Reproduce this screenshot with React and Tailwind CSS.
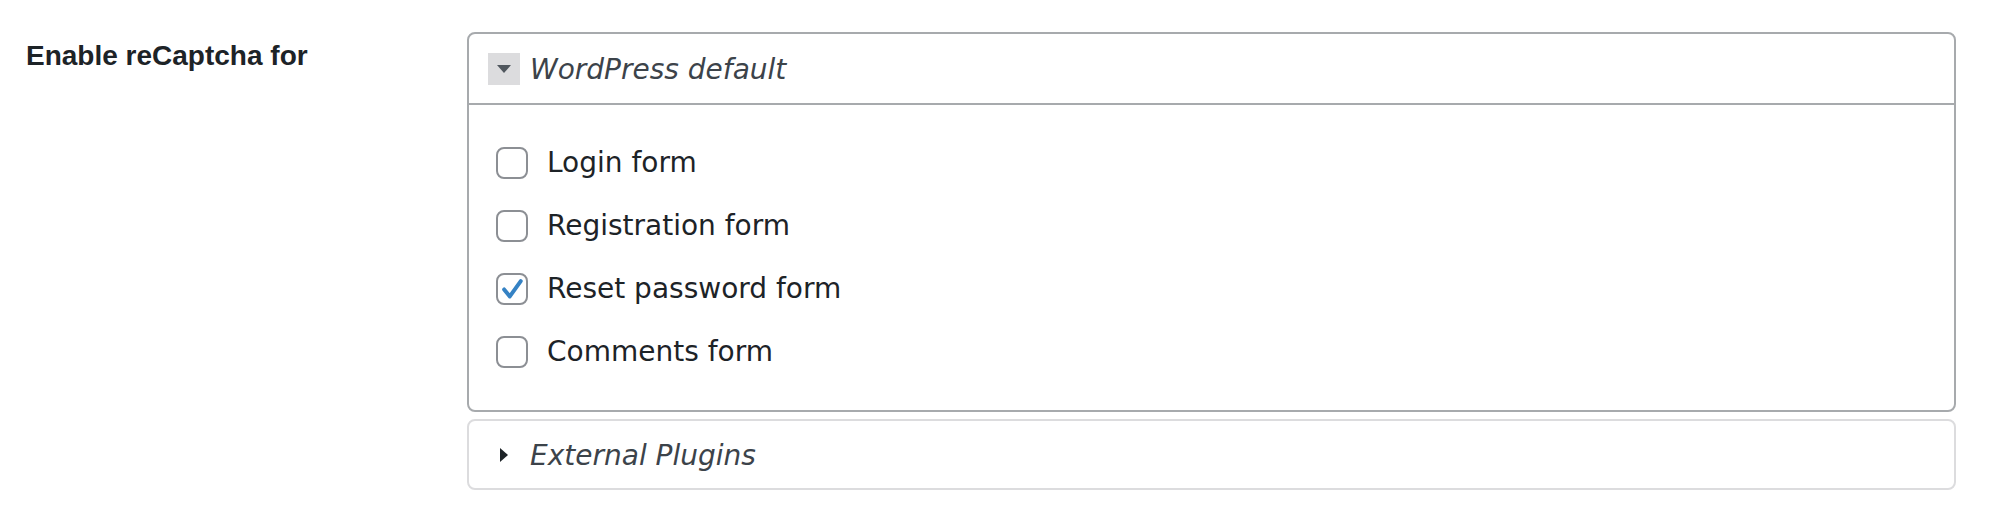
import React, { useState } from "react";

const options = [
  { id: "login", label: "Login form", checked: false },
  { id: "registration", label: "Registration form", checked: false },
  { id: "reset", label: "Reset password form", checked: true },
  { id: "comments", label: "Comments form", checked: false },
];

function Checkbox({ checked, onChange }) {
  return (
    <button
      type="button"
      onClick={onChange}
      className="w-[32px] h-[32px] shrink-0 rounded-[8px] border-2 border-[#8c8f94] bg-white flex items-center justify-center"
    >
      {checked && (
        <svg width="32" height="32" viewBox="0 0 32 32">
          <path
            d="M7 16.5 L13.5 24.5 L26 7"
            fill="none"
            stroke="#3582c4"
            strokeWidth="4.5"
            strokeLinecap="round"
            strokeLinejoin="round"
          />
        </svg>
      )}
    </button>
  );
}

export default function App() {
  const [open, setOpen] = useState(true);
  const [extOpen, setExtOpen] = useState(false);
  const [values, setValues] = useState(
    options.reduce((acc, o) => ({ ...acc, [o.id]: o.checked }), {})
  );

  return (
    <div className="w-[2014px] h-[514px] bg-white flex pt-[32px]">
      {/* Label */}
      <div className="w-[467px] shrink-0 pl-[26px] pt-[7px]">
        <span
          className="text-[28px] leading-[34px] font-bold text-[#1d2327]"
          style={{ fontFamily: '"Liberation Sans", Arial, sans-serif' }}
        >
          Enable reCaptcha for
        </span>
      </div>

      {/* Sections */}
      <div
        className="w-[1489px] flex flex-col gap-[7px]"
        style={{ fontFamily: '"DejaVu Sans", Verdana, sans-serif' }}
      >
        <div className="border-2 border-[#a7aaad] rounded-[8px] bg-white">
          <div
            className="h-[71px] flex items-center pl-[19px] border-b-2 border-[#a7aaad] cursor-pointer"
            onClick={() => setOpen(!open)}
          >
            <div className="w-[32px] h-[32px] bg-[#dcdcde] flex items-center justify-center">
              <svg width="16" height="10" viewBox="0 0 16 10">
                <polygon points="1,1 15,1 8,9" fill="#50575e" />
              </svg>
            </div>
            <span className="ml-[10px] pt-[2px] text-[28px] italic text-[#3c434a]">
              WordPress default
            </span>
          </div>

          {open && (
            <div className="pl-[27px] pt-[26px] pb-[27px]">
              {options.map((o) => (
                <div key={o.id} className="h-[63px] flex items-center">
                  <Checkbox
                    checked={values[o.id]}
                    onChange={() =>
                      setValues({ ...values, [o.id]: !values[o.id] })
                    }
                  />
                  <span className="ml-[19px] text-[28px] text-[#1d2327]">
                    {o.label}
                  </span>
                </div>
              ))}
            </div>
          )}
        </div>

        <div className="border-2 border-[#dcdcde] rounded-[8px] bg-white">
          <div
            className="h-[67px] flex items-center pl-[19px] cursor-pointer"
            onClick={() => setExtOpen(!extOpen)}
          >
            <div className="w-[32px] h-[32px] flex items-center justify-center">
              <svg width="10" height="16" viewBox="0 0 10 16">
                <polygon points="1,1 9,8 1,15" fill="#1d2327" />
              </svg>
            </div>
            <span className="ml-[10px] pt-[2px] text-[28px] italic text-[#3c434a]">
              External Plugins
            </span>
          </div>
        </div>
      </div>
    </div>
  );
}
